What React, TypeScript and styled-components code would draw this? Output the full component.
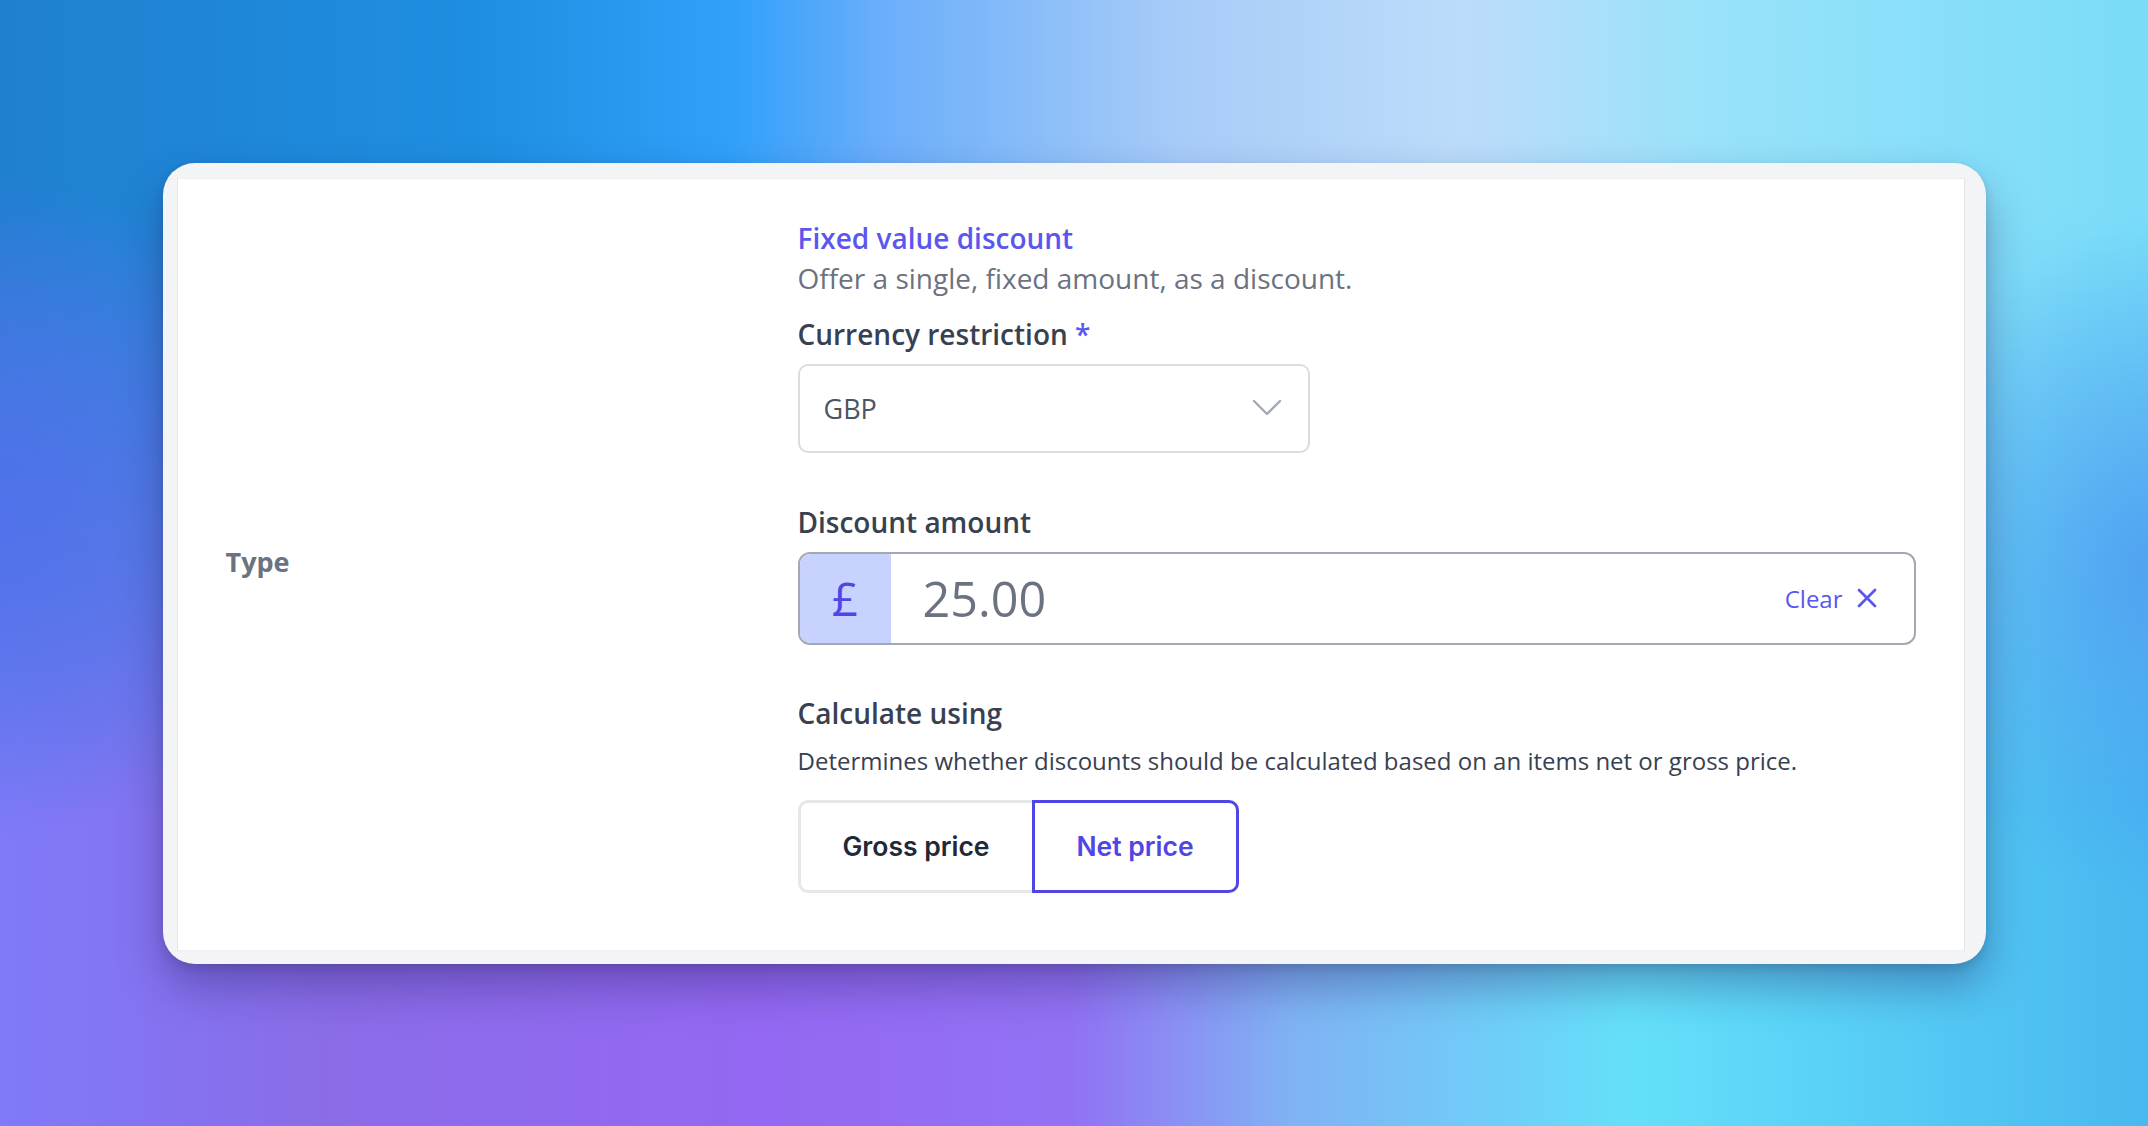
import React from 'react';
import styled, { createGlobalStyle } from 'styled-components';

const colours = {
  indigo: '#4f46e5',
  indigoSoft: '#5b57ee',
  indigoTint: '#c7d2fe',
  label: '#374151',
  muted: '#6b7280',
  borderSoft: '#d9dce1',
  borderStrong: '#a3a9b3',
};

const GlobalStyle = createGlobalStyle`
  html, body {
    margin: 0;
    padding: 0;
  }
  body {
    font-family: "Open Sans", "Noto Sans", Arial, sans-serif;
    -webkit-font-smoothing: antialiased;
  }
  * {
    box-sizing: border-box;
  }
`;

const Backdrop = styled.div`
  position: relative;
  width: 100%;
  height: 100vh;
  display: flex;
  align-items: center;
  justify-content: center;
  overflow: hidden;
  background: linear-gradient(
    to right,
    #7f7af8 0%,
    #8a6ce8 15%,
    #9468f2 35%,
    #9272f4 50%,
    #80b2f4 60%,
    #64e0fa 76%,
    #48b8f0 100%
  );

  &::before {
    content: '';
    position: absolute;
    inset: 0;
    background: linear-gradient(
      to right,
      #2080d0 0%,
      #1e8ee0 22%,
      #30a0fa 34%,
      #6aaefa 41%,
      #a8ccf8 55%,
      #bcdcfa 68%,
      #98e2fa 80%,
      #7adcf8 100%
    );
    -webkit-mask-image: linear-gradient(to bottom, black 18%, transparent 72%);
    mask-image: linear-gradient(to bottom, black 18%, transparent 72%);
  }

  &::after {
    content: '';
    position: absolute;
    inset: 0;
    background: radial-gradient(ellipse 12% 30% at 0% 45%, rgba(80, 110, 236, 0.75), transparent 100%),
      radial-gradient(ellipse 12% 30% at 100% 50%, rgba(72, 140, 240, 0.6), transparent 100%);
  }
`;

const Card = styled.div`
  position: relative;
  z-index: 1;
  width: 1823px;
  padding: 15px 21px 13px 14px;
  background: #f3f4f6;
  border-radius: 32px;
  box-shadow: 0 22px 44px rgba(30, 24, 90, 0.35), 0 4px 10px rgba(0, 0, 0, 0.12);
`;

const Panel = styled.div`
  display: grid;
  grid-template-columns: 620px 1fr;
  background: #ffffff;
  border-top: 1px solid #eceef2;
  border-left: 1px solid #e4e6ea;
  border-right: 1px solid #e4e6ea;
  border-bottom: 1px solid #eef0f3;
  padding: 42px 48px 57px 0;
`;

const RowLabel = styled.div`
  display: flex;
  align-items: center;
  padding: 10px 0 0 48px;
  font-size: 27px;
  font-weight: 700;
  color: ${colours.muted};
`;

const Fields = styled.div`
  display: flex;
  flex-direction: column;
`;

const Title = styled.div`
  font-size: 28px;
  line-height: 34px;
  font-weight: 600;
  color: ${colours.indigoSoft};
`;

const Lead = styled.div`
  margin-top: 6px;
  font-size: 28px;
  line-height: 34px;
  color: ${colours.muted};
`;

const Label = styled.div<{ $gap: number }>`
  margin-top: ${(p) => p.$gap}px;
  font-size: 28px;
  line-height: 34px;
  font-weight: 600;
  color: ${colours.label};
`;

const Required = styled.span`
  color: ${colours.indigoSoft};
`;

const Select = styled.div`
  margin-top: 13px;
  width: 512px;
  height: 89px;
  display: flex;
  align-items: center;
  justify-content: space-between;
  padding: 0 26px 0 24px;
  border: 2px solid ${colours.borderSoft};
  border-radius: 10px;
  font-size: 27px;
  color: #4b5563;
`;

const AmountField = styled.div`
  margin-top: 13px;
  height: 93px;
  display: flex;
  align-items: stretch;
  border: 2px solid ${colours.borderStrong};
  border-radius: 12px;
  overflow: hidden;
`;

const Prefix = styled.div`
  width: 91px;
  display: flex;
  align-items: center;
  justify-content: center;
  background: ${colours.indigoTint};
  color: ${colours.indigo};
  font-size: 46px;
`;

const AmountValue = styled.div`
  flex: 1;
  display: flex;
  align-items: center;
  padding-left: 32px;
  font-size: 48.5px;
  color: ${colours.muted};
`;

const ClearButton = styled.div`
  display: flex;
  align-items: center;
  gap: 14px;
  padding-right: 37px;
  font-size: 24px;
  color: ${colours.indigoSoft};
`;

const Hint = styled.div`
  margin-top: 16px;
  font-size: 24px;
  line-height: 30px;
  color: ${colours.label};
`;

const Toggle = styled.div`
  margin-top: 24px;
  display: flex;
  height: 93px;
`;

const ToggleOption = styled.div<{ $active?: boolean; $side: 'left' | 'right'; $width: number }>`
  width: ${(p) => p.$width}px;
  display: flex;
  align-items: center;
  justify-content: center;
  font-family: Inter, "Open Sans", Arial, sans-serif;
  font-size: 26.5px;
  font-weight: 600;
  color: ${(p) => (p.$active ? colours.indigo : '#1f2937')};
  border: ${(p) => (p.$active ? `3px solid ${colours.indigo}` : '3px solid #e5e7eb')};
  border-radius: ${(p) => (p.$side === 'left' ? '10px 0 0 10px' : '0 10px 10px 0')};
  ${(p) => (p.$side === 'left' ? 'border-right: none;' : '')}
`;

const Chevron = () => (
  <svg width="30" height="18" viewBox="0 0 30 18" fill="none">
    <polyline points="2,2 15,15 28,2" stroke="#a3a9b3" strokeWidth="2.4" strokeLinecap="round" strokeLinejoin="round" />
  </svg>
);

const Cross = () => (
  <svg width="20" height="20" viewBox="0 0 20 20" fill="none">
    <path d="M2 2 L18 18 M18 2 L2 18" stroke={colours.indigoSoft} strokeWidth="2.8" strokeLinecap="round" />
  </svg>
);

export default function App() {
  return (
    <>
      <GlobalStyle />
      <Backdrop>
        <Card>
          <Panel>
            <RowLabel>Type</RowLabel>
            <Fields>
              <Title>Fixed value discount</Title>
              <Lead>Offer a single, fixed amount, as a discount.</Lead>
              <Label $gap={22}>
                Currency restriction <Required>*</Required>
              </Label>
              <Select>
                <span>GBP</span>
                <Chevron />
              </Select>
              <Label $gap={52}>Discount amount</Label>
              <AmountField>
                <Prefix>£</Prefix>
                <AmountValue>25.00</AmountValue>
                <ClearButton>
                  Clear
                  <Cross />
                </ClearButton>
              </AmountField>
              <Label $gap={51}>Calculate using</Label>
              <Hint>Determines whether discounts should be calculated based on an items net or gross price.</Hint>
              <Toggle>
                <ToggleOption $side="left" $width={234}>
                  Gross price
                </ToggleOption>
                <ToggleOption $side="right" $width={207} $active>
                  Net price
                </ToggleOption>
              </Toggle>
            </Fields>
          </Panel>
        </Card>
      </Backdrop>
    </>
  );
}
